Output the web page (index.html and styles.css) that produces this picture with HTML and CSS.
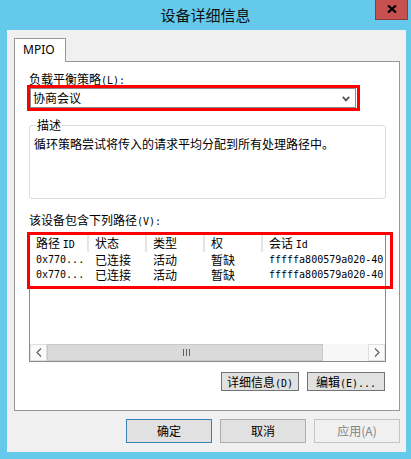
FILE: index.html
```html
<!DOCTYPE html>
<html lang="zh-CN">
<head>
<meta charset="utf-8">
<title>设备详细信息</title>
<link rel="stylesheet" href="styles.css">
</head>
<body>
<div class="window">
  <div class="titlebar">
    <div></div>
    <div class="title">设备详细信息</div>
    <div class="close">
      <svg width="10" height="8" viewBox="0 0 10 8"><path d="M1 0.5 L9 7.5 M9 0.5 L1 7.5" stroke="#000" stroke-width="2.2" fill="none"/></svg>
    </div>
  </div>
  <div class="client">
    <div class="tabs"><div class="tab">MPIO</div></div>
    <div class="panel">
      <div class="label">负载平衡策略<span class="lat">(L):</span></div>
      <div class="combo-wrap">
        <div class="combo">
          <span>协商会议</span>
          <svg width="8" height="6" viewBox="0 0 8 6"><path d="M0.8 0.8 L4 4.4 L7.2 0.8" stroke="#555" stroke-width="1.8" fill="none"/></svg>
        </div>
        <div class="mark mark-combo"></div>
      </div>
      <fieldset class="group">
        <legend>描述</legend>
        <p>循环策略尝试将传入的请求平均分配到所有处理路径中。</p>
      </fieldset>
      <div class="label label-paths">该设备包含下列路径<span class="lat">(V):</span></div>
      <div class="list-wrap">
        <div class="list">
          <div class="lv-head">
            <div>路径 <span class="lat">ID</span></div>
            <div>状态</div>
            <div>类型</div>
            <div>权</div>
            <div>会话 <span class="lat">Id</span></div>
          </div>
          <div class="lv-row">
            <div class="lat">0x770...</div>
            <div>已连接</div>
            <div>活动</div>
            <div>暂缺</div>
            <div class="lat">fffffa800579a020-40000000</div>
          </div>
          <div class="lv-row">
            <div class="lat">0x770...</div>
            <div>已连接</div>
            <div>活动</div>
            <div>暂缺</div>
            <div class="lat">fffffa800579a020-40000000</div>
          </div>
          <div class="lv-spacer"></div>
          <div class="hscroll">
            <div class="sb-arrow">
              <svg width="6" height="9" viewBox="0 0 6 9"><path d="M5 0.5 L1 4.5 L5 8.5" stroke="#606060" stroke-width="1.2" fill="none"/></svg>
            </div>
            <div class="sb-thumb">
              <svg width="7" height="7" viewBox="0 0 7 7"><path d="M0.5 0 V7 M3.5 0 V7 M6.5 0 V7" stroke="#606060" stroke-width="1" fill="none"/></svg>
            </div>
            <div class="sb-track"></div>
            <div class="sb-arrow">
              <svg width="6" height="9" viewBox="0 0 6 9"><path d="M1 0.5 L5 4.5 L1 8.5" stroke="#606060" stroke-width="1.2" fill="none"/></svg>
            </div>
          </div>
        </div>
        <div class="mark mark-list"></div>
      </div>
      <div class="btn-row">
        <button class="btn small">详细信息<span class="lat">(D)</span></button>
        <button class="btn small">编辑<span class="lat">(E)...</span></button>
      </div>
    </div>
    <div class="dlg-buttons">
      <button class="btn big default">确定</button>
      <button class="btn big">取消</button>
      <button class="btn big" disabled>应用(A)</button>
    </div>
  </div>
</div>
</body>
</html>
```
FILE: styles.css
```css
* { box-sizing: border-box; }
html, body { margin: 0; padding: 0; }
body {
  width: 411px;
  height: 459px;
  background: #64c9ea;
  font-family: "Noto Sans CJK SC", "Noto Sans", sans-serif;
  font-size: 12px;
  color: #000;
  overflow: hidden;
}
.window { width: 411px; height: 459px; }

.titlebar {
  height: 30px;
  display: grid;
  grid-template-columns: 1fr auto 1fr;
  align-items: start;
}
.title {
  font-size: 15px;
  line-height: 29px;
  color: #111;
}
.close {
  justify-self: end;
  margin-right: 3px;
  width: 33px;
  height: 20px;
  background: #c75050;
  border: 1px solid #8f3a3a;
  border-top: none;
  display: flex;
  align-items: center;
  justify-content: center;
  padding-bottom: 1px;
}

.client {
  margin: 0 5px 0 7px;
  height: 422px;
  background: #f0f0f0;
  padding: 8px 6px 0 7px;
}

.tabs { display: flex; height: 23px; }
.tab {
  position: relative;
  z-index: 1;
  width: 52px;
  height: 24px;
  background: #fff;
  border: 1px solid #979797;
  border-bottom: none;
  font-family: "Noto Sans", sans-serif;
  font-size: 12px;
  line-height: 21px;
  padding-left: 8px;
}

.panel {
  width: 386px;
  height: 350px;
  background: #fff;
  border: 1px solid #979797;
  padding: 10px 13px 19px 14px;
}

.lat {
  font-family: "DejaVu Sans Mono", "Liberation Mono", monospace;
  font-size: 10px;
}

.label { line-height: 14px; height: 14px; white-space: nowrap; }

.combo-wrap {
  position: relative;
  margin: 2px 0 0 1px;
  width: 326px;
  height: 20px;
}
.combo {
  height: 20px;
  border: 1px solid #8a8a8a;
  background: #fff;
  display: flex;
  align-items: center;
  justify-content: space-between;
  padding: 0 5px 0 2px;
  line-height: 18px;
}
.combo svg { margin-top: 1px; }

.mark {
  position: absolute;
  border: 3px solid #ff0000;
  pointer-events: none;
}
.mark-combo { left: -3px; top: -3px; width: 333px; height: 26px; }
.mark-list { left: -2px; top: -2px; width: 366px; height: 57px; }

.group {
  margin: 10px 0 0 0;
  width: 357px;
  padding: 0 4px;
  border: 1px solid #d5dfe5;
  border-radius: 3px;
  min-inline-size: 0;
}
.group legend {
  padding: 0 1px;
  margin-left: 2px;
  line-height: 14px;
  font-size: 12px;
}
.group p {
  margin: 5px 0 47px 0;
  line-height: 14px;
  white-space: nowrap;
}

.label-paths { margin-top: 14px; }

.list-wrap {
  position: relative;
  margin-top: 7px;
  width: 357px;
  height: 128px;
}
.list {
  height: 128px;
  border: 1px solid #8c8c8c;
  background: #fff;
  display: flex;
  flex-direction: column;
  overflow: hidden;
}
.lv-head, .lv-row {
  display: grid;
  grid-template-columns: 59px 58px 58px 58px 1fr;
  white-space: nowrap;
}
.lv-head { height: 17px; line-height: 16px; }
.lv-head > div {
  padding-left: 6px;
  border-right: 2px solid #e5e5e5;
  overflow: hidden;
}
.lv-head > div:last-child { border-right: none; }
.lv-row { height: 15px; line-height: 15px; }
.lv-row > div { padding-left: 6px; overflow: hidden; }
.lv-row > div:last-child { padding-left: 6px; margin-right: 2px; }
.lv-spacer { flex: 1; }

.hscroll {
  height: 17px;
  display: flex;
  background: #f7f7f7;
}
.sb-arrow {
  width: 17px;
  height: 17px;
  display: flex;
  align-items: center;
  justify-content: center;
  border: 1px solid #e0e0e0;
  background: #fafafa;
}
.sb-thumb {
  width: 276px;
  height: 17px;
  background: #dadada;
  border: 1px solid #c8c8c8;
  display: flex;
  align-items: center;
  justify-content: center;
  padding-left: 2px;
}
.sb-track { flex: 1; background: #f7f7f7; }

.btn-row {
  margin-top: 10px;
  width: 357px;
  display: flex;
  justify-content: flex-end;
  gap: 8px;
}
.btn {
  font-family: "Noto Sans CJK SC", "Noto Sans", sans-serif;
  font-size: 12px;
  color: #000;
  background: #e1e1e1;
  border: 1px solid #737373;
  padding: 0;
  margin: 0;
  white-space: nowrap;
}
.btn.small { width: 78px; height: 19px; line-height: 17px; }
.btn.small:last-child { margin-right: 1px; }

.dlg-buttons {
  margin-top: 8px;
  display: flex;
  justify-content: flex-end;
  gap: 8px;
}
.btn.big { width: 86px; height: 24px; line-height: 22px; border-color: #adadad; }
.btn.big.default { border-color: #3c7fb1; }
.btn.big:disabled {
  background: #f0f0f0;
  border-color: #c4c4c4;
  color: #838383;
}
```
